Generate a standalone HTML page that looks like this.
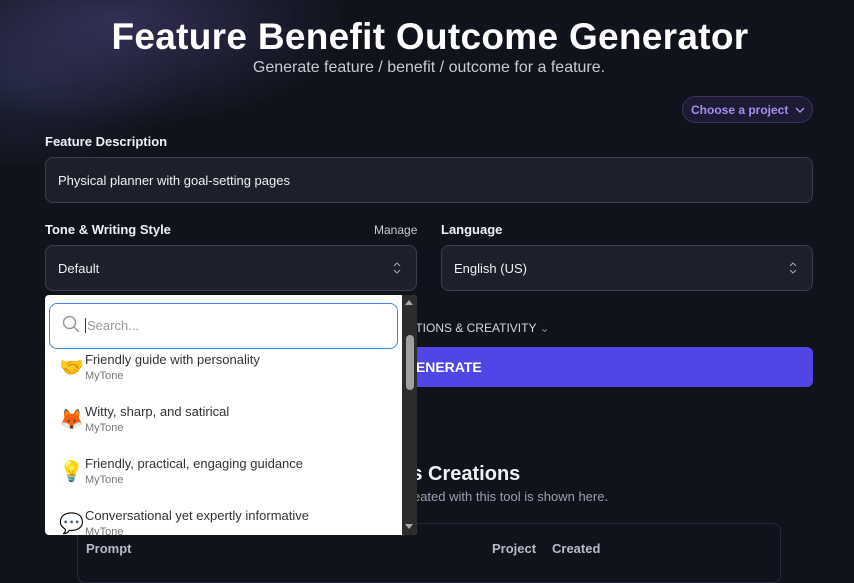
<!DOCTYPE html>
<html><head><style>
*{box-sizing:border-box;margin:0;padding:0}
body{width:854px;height:565px;overflow:hidden;background:#11131c;font-family:"Liberation Sans",sans-serif;color:#e5e7eb;position:relative}
.bg{position:absolute;left:0;top:0;width:854px;height:300px;background:radial-gradient(ellipse 300px 140px at 120px 20px,rgba(90,80,150,.45),transparent 75%),radial-gradient(ellipse 200px 110px at 20px 80px,rgba(60,70,120,.35),transparent 80%)}
.a{position:absolute}
h1{position:absolute;left:0;width:860px;top:16px;text-align:center;font-size:37px;font-weight:900;color:#fff;letter-spacing:.3px}
.sub{left:0;width:858px;top:59px;text-align:center;font-size:16px;color:#c9cbd3}
.proj{left:682px;top:96px;width:131px;height:27px;border:1px solid #3a3560;background:#1d1a33;border-radius:14px;color:#a88ef0;font-size:12px;font-weight:bold;padding:6px 0 0 8px}
.lbl{font-size:13px;font-weight:bold;color:#f1f2f5}
.box{background:#1b202b;border:1px solid #3a4050;border-radius:8px;font-size:13px;color:#f1f2f5;padding:0 12px;display:flex;align-items:center}
.dd{left:45px;top:295px;width:372px;height:240px;background:#fff;border-radius:4px;overflow:hidden}
.sb{position:absolute;right:0;top:0;width:15px;height:240px;background:#2c2c2a}
.item{position:absolute;left:40px;font-size:13px;color:#333}
.item small{display:block;font-size:11px;color:#777;margin-top:3px}
.ic{position:absolute;left:14px;font-size:20px;font-family:"DejaVu Sans",sans-serif}
</style></head><body>
<div class="bg"></div>
<h1>Feature Benefit Outcome Generator</h1>
<div class="a sub">Generate feature / benefit / outcome for a feature.</div>
<div class="a proj">Choose a project &nbsp;<svg width="10" height="7" viewBox="0 0 10 7"><path d="M1 1l4 4 4-4" stroke="#a88ef0" stroke-width="1.5" fill="none"/></svg></div>
<div class="a lbl" style="left:45px;top:134px">Feature Description</div>
<div class="a box" style="left:45px;top:157px;width:768px;height:46px">Physical planner with goal-setting pages</div>
<div class="a lbl" style="left:45px;top:222px">Tone &amp; Writing Style</div>
<div class="a" style="left:374px;top:223px;font-size:12px;color:#c9cbd3">Manage</div>
<div class="a lbl" style="left:441px;top:222px">Language</div>
<div class="a box" style="left:45px;top:245px;width:372px;height:46px">Default</div>
<div class="a box" style="left:441px;top:245px;width:372px;height:46px">English (US)</div>
<svg class="a" style="left:392px;top:260px" width="10" height="16"><path d="M2 6l3-3 3 3M2 10l3 3 3-3" stroke="#aaa" fill="none"/></svg>
<svg class="a" style="left:788px;top:260px" width="10" height="16"><path d="M2 6l3-3 3 3M2 10l3 3 3-3" stroke="#aaa" fill="none"/></svg>
<div class="a" style="left:362px;top:321px;font-size:12px;color:#d5d7de">INSTRUCTIONS &amp; CREATIVITY <span style="color:#888">⌄</span></div>
<div class="a" style="left:45px;top:347px;width:768px;height:40px;background:#5046e5;border-radius:6px;color:#fff;font-weight:bold;font-size:14px;padding:12px 0 0 360px">GENERATE</div>
<div class="a" style="left:338px;top:463px;font-size:20px;font-weight:bold;color:#f1f2f5">Previous Creations</div>
<div class="a" style="left:353px;top:489px;font-size:13px;color:#9ca0ad">Content created with this tool is shown here.</div>
<div class="a" style="left:77px;top:523px;width:704px;height:60px;border:1px solid #262a3a;border-radius:8px"></div>
<div class="a" style="left:86px;top:541px;font-size:13px;color:#b8bcc8;font-weight:bold">Prompt</div>
<div class="a" style="left:492px;top:541px;font-size:13px;color:#b8bcc8;font-weight:bold">Project</div>
<div class="a" style="left:552px;top:541px;font-size:13px;color:#b8bcc8;font-weight:bold">Created</div>
<div class="a dd">
 <div class="a" style="left:4px;top:8px;width:349px;height:46px;border:1px solid #3b82f6;border-radius:8px;background:#fff"></div>
 <svg class="a" style="left:17px;top:20px" width="18" height="18"><circle cx="7.5" cy="7.5" r="6" stroke="#999" stroke-width="1.5" fill="none"/><path d="M12 12l5 5" stroke="#999" stroke-width="1.5"/></svg>
 <div class="a" style="left:40px;top:23px;font-size:13px;color:#999;border-left:1px solid #333;padding-left:1px">Search...</div>
 <div class="ic" style="top:60px">🤝</div><div class="item" style="top:57px">Friendly guide with personality<small>MyTone</small></div>
 <div class="ic" style="top:112px">🦊</div><div class="item" style="top:109px">Witty, sharp, and satirical<small>MyTone</small></div>
 <div class="ic" style="top:164px">💡</div><div class="item" style="top:161px">Friendly, practical, engaging guidance<small>MyTone</small></div>
 <div class="ic" style="top:216px">💬</div><div class="item" style="top:213px">Conversational yet expertly informative<small>MyTone</small></div>
 <div class="sb"><div style="position:absolute;left:4px;top:40px;width:8px;height:55px;background:#a0a0a0;border-radius:4px"></div>
 <div style="position:absolute;left:3px;top:5px;border:4px solid transparent;border-bottom:5px solid #aaa;border-top:0"></div>
 <div style="position:absolute;left:3px;bottom:6px;border:4px solid transparent;border-top:5px solid #aaa;border-bottom:0"></div></div>
</div>
</body></html>
